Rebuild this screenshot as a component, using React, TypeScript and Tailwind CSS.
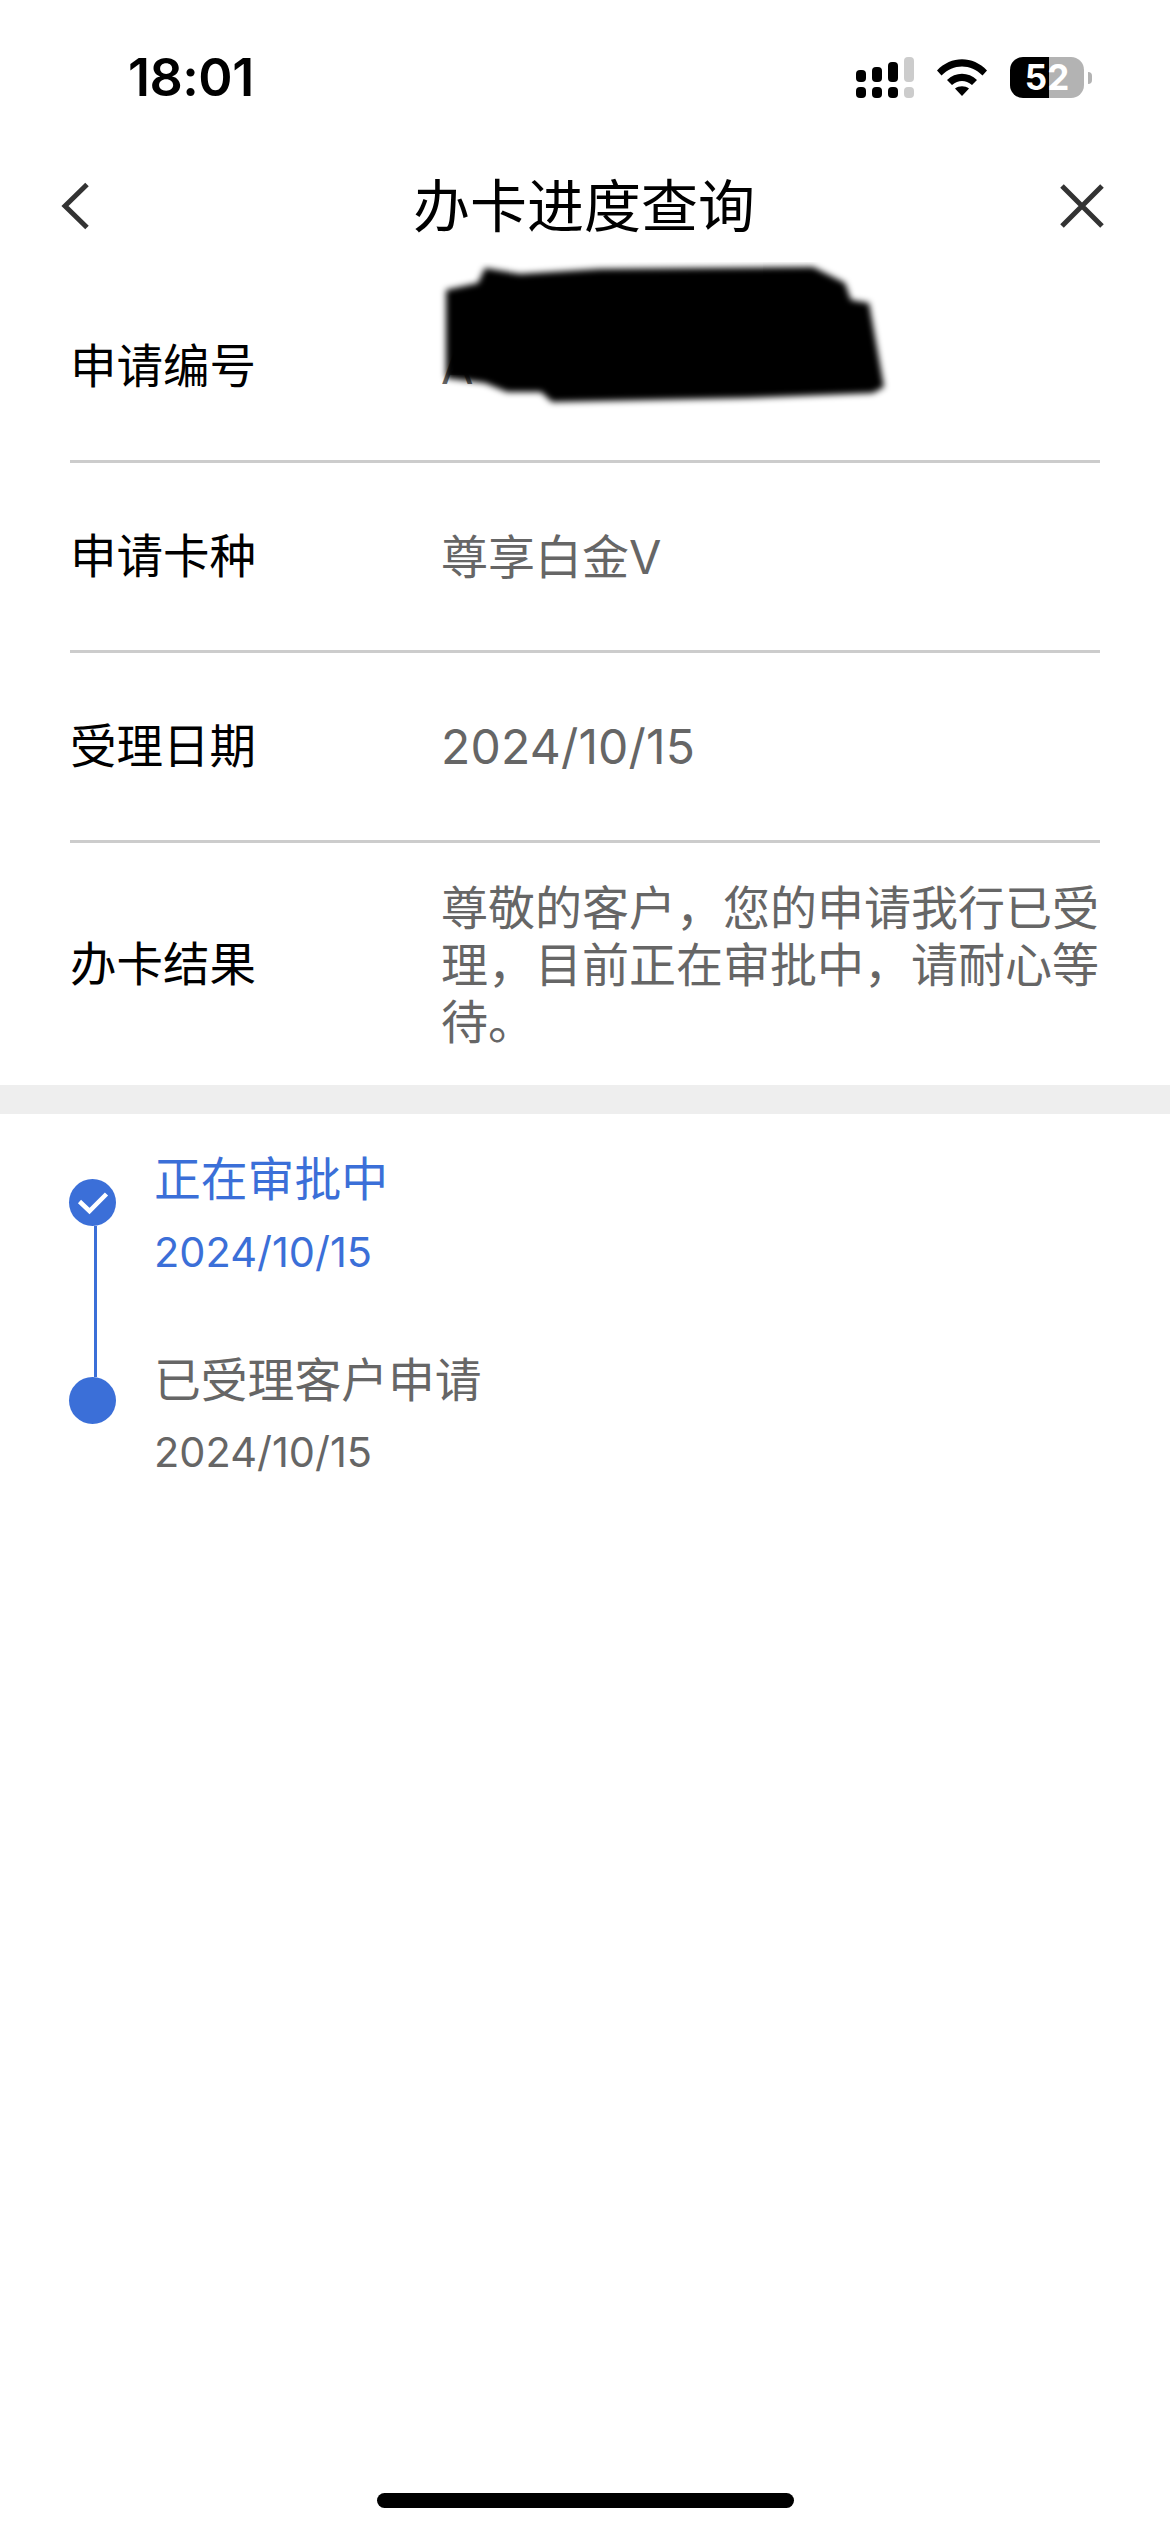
import React from "react";

const CJK = "font-['Inter','Noto_Sans_CJK_SC',sans-serif]";

function Signal() {
  const tops = [
    { h: "h-[12px]", c: "bg-black" },
    { h: "h-[15px]", c: "bg-black" },
    { h: "h-[20px]", c: "bg-black" },
    { h: "h-[25px]", c: "bg-[#cccccc]" },
  ];
  return (
    <div className="flex gap-[6px] items-end w-[58px]">
      {tops.map((t, i) => (
        <div key={i} className="flex flex-col gap-[5px] w-[10px]">
          <div className={`${t.h} ${t.c} rounded-[4px]`} />
          <div className={`h-[11px] ${t.c} rounded-[4px]`} />
        </div>
      ))}
    </div>
  );
}

function Wifi() {
  return (
    <svg width="50" height="37" viewBox="0 0 50 37">
      <path d="M0 11.5C14-3.5 36-3.5 50 11.5L45.500 16.500C33.500 4.500 16.500 4.500 4.500 16.500Z" fill="#000" />
      <path d="M10 21C18.500 12.500 31.500 12.500 40 21L35 26C28.500 20.500 21.500 20.500 15 26Z" fill="#000" />
      <path d="M18 29.500C22 26.500 28 26.500 32 29.500L25 37Z" fill="#000" />
    </svg>
  );
}

function Battery() {
  return (
    <div className="flex items-center gap-[4px]">
      <div className="relative w-[74px] h-[41px] flex">
        <div className="w-[39px] h-full bg-black rounded-l-[13px]" />
        <div className="w-[35px] h-full bg-[#b3b3b3] rounded-r-[13px]" />
        <div className="absolute inset-0 flex items-center justify-center text-white font-bold text-[35px] leading-[41px] font-['Inter',sans-serif]">
          52
        </div>
      </div>
      <div className="w-[4px] h-[12px] rounded-r-[4px] bg-[#b3b3b3]" />
    </div>
  );
}

function Row({ label, children }: { label: string; children: React.ReactNode }) {
  return (
    <div className="mx-[70px] flex items-center border-b-[3px] border-[#cccccc] h-[190px]">
      <div className="w-[371px] shrink-0 text-[46.500px] leading-[57px] text-black">{label}</div>
      <div className="flex-1 text-[47px] leading-[57px] text-[#666666]">{children}</div>
    </div>
  );
}

export default function App() {
  return (
    <div className={`w-[1170px] h-[2532px] bg-white relative overflow-hidden ${CJK}`}>
      {/* status bar */}
      <div className="h-[156px] pt-[57px] pl-[128px] pr-[78px] flex items-start justify-between">
        <div className="text-[52px] leading-[42px] font-semibold text-black tracking-[-0.5px]">18:01</div>
        <div className="flex items-start gap-[23px]">
          <Signal />
          <div className="pt-[2px]">
            <Wifi />
          </div>
          <Battery />
        </div>
      </div>

      {/* nav bar */}
      <div className="h-[100px] pl-[60px] pr-[66px] flex items-center justify-between relative">
        <svg width="30" height="48" viewBox="0 0 30 48" fill="none">
          <path d="M27 2.500L5 24L27 45.500" stroke="#333333" strokeWidth="5" />
        </svg>
        <div className="absolute inset-0 flex items-center justify-center text-[57px] text-black leading-none pr-[2px]">
          办卡进度查询
        </div>
        <svg width="44" height="44" viewBox="0 0 44 44" fill="none">
          <path d="M2 2L42 42M42 2L2 42" stroke="#333333" strokeWidth="5" />
        </svg>
      </div>

      {/* info rows */}
      <div className="pt-[17px]">
        <Row label="申请编号">
          <div className="relative">
            A
            <svg
              className="absolute left-[-5px] top-[-76px]"
              width="460"
              height="150"
              viewBox="436 262 460 150"
            >
              <path
                d="M485 268L520 274L600 269L813 267L845 283L851 300L869 303L884 387L873 393L746 398L552 402L541 392L507 392L485 383L446 378L446 290L478 283Z"
                fill="#000"
                className="blur-[3px]"
              />
            </svg>
          </div>
        </Row>
        <Row label="申请卡种">尊享白金V</Row>
        <Row label="受理日期">
          <span className="text-[48px] tracking-[0.2px]">2024/10/15</span>
        </Row>
        <div className="mx-[70px] flex items-center h-[242px]">
          <div className="w-[371px] shrink-0 text-[46.500px] leading-[57px] text-black">办卡结果</div>
          <div className="flex-1 text-[47px] leading-[57px] text-[#666666]">
            尊敬的客户，您的申请我行已受理，目前正在审批中，请耐心等待。
          </div>
        </div>
      </div>

      {/* band */}
      <div className="h-[29px] bg-[#eeeeee]" />

      {/* timeline */}
      <div className="flex pl-[69px]">
        <div className="w-[47px] pt-[65px] mr-[38px] flex flex-col items-center h-[310px]">
          <div className="w-[47px] h-[47px] rounded-full bg-[#3b6fd8] flex items-center justify-center shrink-0">
            <svg width="32" height="24" viewBox="0 0 32 24" fill="none">
              <path d="M2.500 10.500L12.500 20L29.500 3" stroke="#ffffff" strokeWidth="4.500" />
            </svg>
          </div>
          <div className="w-[3px] h-[151px] bg-[#3b6fd8] ml-[6px] shrink-0" />
          <div className="w-[47px] h-[47px] rounded-full bg-[#3b6fd8] shrink-0" />
        </div>
        <div className="pt-[37px]">
          <div className="text-[46.800px] leading-[57px] text-[#3b6fd8]">正在审批中</div>
          <div className="text-[41.500px] leading-[50px] text-[#3b6fd8] mt-[19px]">2024/10/15</div>
          <div className="text-[46.800px] leading-[57px] text-[#666666] mt-[75px]">已受理客户申请</div>
          <div className="text-[41.500px] leading-[50px] text-[#666666] mt-[18px]">2024/10/15</div>
        </div>
      </div>

      {/* home indicator */}
      <div className="absolute bottom-[24px] left-[377px] w-[417px] h-[15px] rounded-[8px] bg-black" />
    </div>
  );
}
